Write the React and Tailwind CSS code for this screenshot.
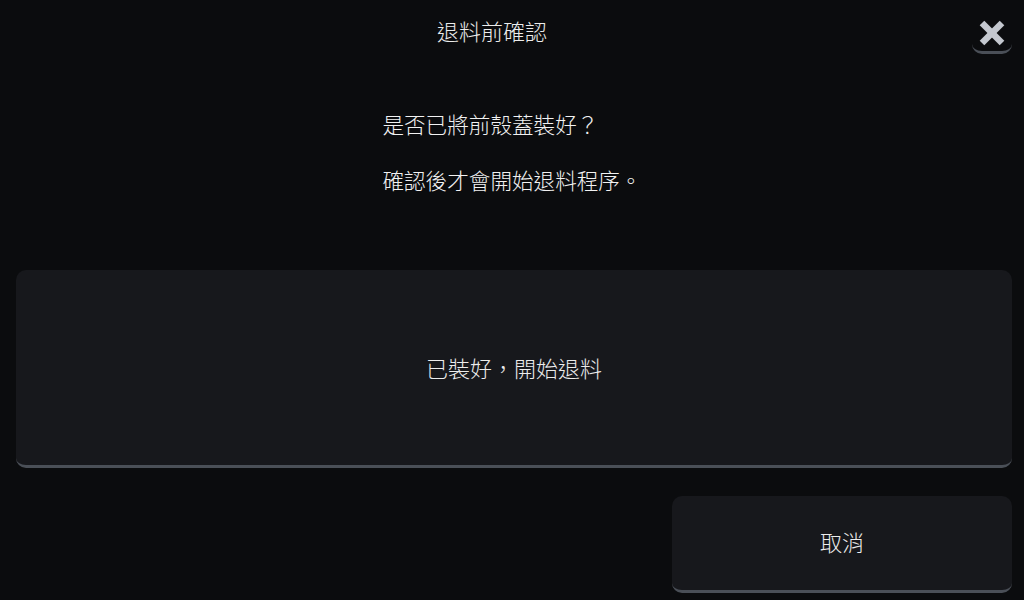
import React from 'react';

const font = { fontFamily: '"Noto Sans CJK TC", "Noto Sans", sans-serif' };

const App = () => {
  return (
    <div
      className="w-[1024px] h-[600px] bg-[#0b0c0e] text-[#f2f2f2] flex flex-col overflow-hidden"
      style={font}
    >
      {/* Header */}
      <div className="flex items-center px-3 mt-[14px] h-10">
        <div className="flex-1 text-center text-[22px] leading-[30px] text-[#ececec] font-light -mt-[8px]">退料前確認</div>
        <button className="w-10 h-10 rounded-[10px] border-b-[3px] border-[#4a4f57] flex items-center justify-center">
          <svg width="28" height="28" viewBox="0 0 28 28">
            <line x1="4" y1="4" x2="24" y2="24" stroke="#c4c8cf" strokeWidth="6.5" />
            <line x1="24" y1="4" x2="4" y2="24" stroke="#c4c8cf" strokeWidth="6.5" />
          </svg>
        </button>
      </div>

      {/* Message */}
      <div className="flex justify-center mt-[56px]">
        <div className="flex flex-col gap-[28px] text-[21.6px] leading-[28px] text-left font-light">
          <p>是否已將前殼蓋裝好？</p>
          <p>確認後才會開始退料程序。</p>
        </div>
      </div>

      {/* Actions */}
      <div className="pl-4 pr-3 mt-[76px] flex flex-col gap-[28px]">
        <button className="h-[198px] w-full rounded-[10px] bg-[#17181c] border-b-[3px] border-[#4a4f57] text-[22px] text-[#ececec] font-light">
          已裝好，開始退料
        </button>
        <div className="flex justify-end">
          <button className="h-[97px] w-[340px] rounded-[10px] bg-[#17181c] border-b-[3px] border-[#4a4f57] text-[22px] text-[#ececec] font-light pb-[3px]">
            取消
          </button>
        </div>
      </div>
    </div>
  );
};

export default App;
